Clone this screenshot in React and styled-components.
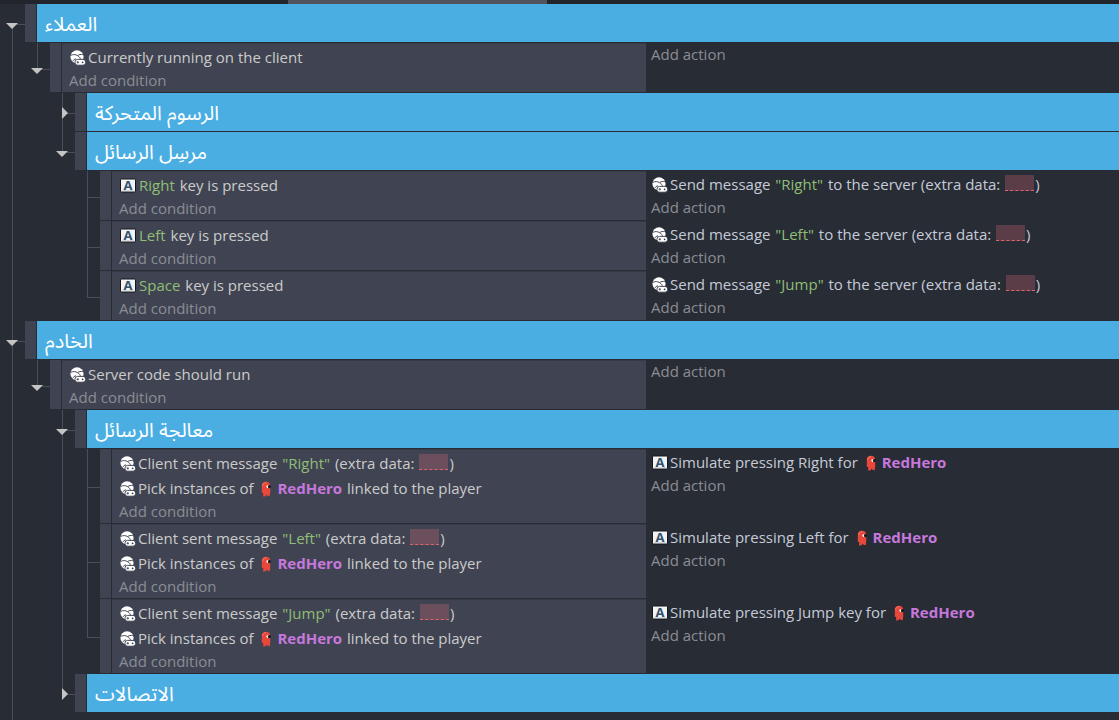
import React from "react";
import styled, { createGlobalStyle, css } from "styled-components";

const INDENT = 25;
const LINE = "#4a4e59";

const GlobalStyle = createGlobalStyle`
  * { box-sizing: border-box; }
  body {
    margin: 0;
    background: #282c34;
    color: #c9ccd3;
    font-family: "Open Sans", "Noto Sans", "DejaVu Sans", sans-serif;
    font-size: 15px;
  }
  button {
    border: 0;
    padding: 0;
    margin: 0;
    background: none;
    color: inherit;
    font: inherit;
    cursor: pointer;
  }
`;

const Page = styled.main`
  display: flex;
  flex-direction: column;
  min-height: 100vh;
  overflow: hidden;
`;

const TopStrip = styled.div`
  display: grid;
  grid-template-columns: 288fr 259fr 572fr;
  height: 4px;
  background: #23252c;
`;

const ActiveTab = styled.div`
  grid-column: 2;
  background: #50545f;
`;

const List = styled.ul`
  list-style: none;
  margin: 0;
  padding: 0;
`;

const Tree = styled(List)`
  position: relative;
  flex: 1;
  &::before {
    content: "";
    position: absolute;
    left: 12px;
    top: 20px;
    bottom: 0;
    width: 1px;
    background: ${LINE};
  }
`;

const Children = styled(List)`
  padding-left: ${INDENT}px;
`;

const Node = styled.li`
  position: relative;
  ${({ $continues }) =>
    $continues &&
    css`
      &::before {
        content: "";
        position: absolute;
        left: 12px;
        top: 0;
        bottom: 0;
        width: 1px;
        background: ${LINE};
      }
    `}
`;

const Row = styled.div`
  display: flex;
  padding-bottom: 1px;
`;

const Gutter = styled.div`
  position: relative;
  flex: 0 0 ${INDENT}px;
  display: flex;
  align-items: center;
  &::before {
    content: "";
    position: absolute;
    left: 12px;
    right: 0;
    top: ${({ $root }) => ($root ? "50%" : "0")};
    height: ${({ $root }) => ($root ? "1px" : "calc(50% + 1px)")};
    border-left: 1px solid ${LINE};
    border-bottom: 1px solid ${LINE};
  }
`;

const Fold = styled.button`
  position: relative;
  display: flex;
  margin-left: ${({ $open }) => ($open ? "6px" : "12px")};
  padding-top: ${({ $open }) => ($open ? "6px" : "2px")};
  color: #c4c4c4;
`;

const Handle = styled.div`
  flex: 0 0 11px;
  margin-right: 1px;
  background: #404452;
`;

const GroupBar = styled.h2`
  flex: 1;
  display: flex;
  align-items: center;
  margin: 0;
  padding: 3px 8px 0;
  height: 38px;
  background: #4aaee3;
  color: #fff;
  font-family: "Noto Sans Arabic", "Noto Naskh Arabic", "DejaVu Sans", sans-serif;
  font-size: 20px;
  font-weight: 400;
  line-height: 34px;
`;

const Conditions = styled.div`
  flex: 0 0 calc(58vw - ${({ $left }) => $left + 3}px);
  padding: 0 7px;
  border-top: 1px solid #363a46;
  background: #404452;
  color: #cbcbcb;
`;

const Actions = styled.div`
  flex: 1;
  min-width: 0;
  padding: 0 5px;
  color: #c5cad8;
`;

const Instruction = styled.div`
  display: flex;
  align-items: center;
  height: 25px;
  padding-top: 1px;
  line-height: 24px;
  white-space: pre;
`;

const Icon = styled.svg`
  flex: none;
  display: block;
  overflow: visible;
  width: 16px;
  height: 16px;
  margin: 1px 2px 0 1px;
`;

const HeroIcon = styled.svg`
  flex: none;
  width: 10px;
  height: 16px;
  margin: 2px 6px 0 4px;
`;

const Param = styled.button`
  padding: 0 1px;
  color: #8fbe76;
`;

const ObjectParam = styled.button`
  display: flex;
  align-items: center;
  padding-right: 1px;
  color: #c678dd;
  font-weight: 700;
`;

const MissingParam = styled.button`
  width: 29px;
  height: 16px;
  margin: 0 1px 3px 1px;
  border-bottom: 1px dashed #e0626c;
  background: rgba(224, 108, 117, 0.28);
`;

const AddButton = styled.button`
  display: block;
  height: 23px;
  line-height: 23px;
  color: #8a8d95;
`;

const NetIcon = () => (
  <Icon viewBox="0 0 16 16" aria-hidden="true">
    <circle cx="7" cy="6.8" r="6.6" fill="#fff" />
    <path d="M.8 5.4C3 4.2 5.6 4.4 7.6 5.6C9.4 6.6 10.2 8 10.6 9.6M7.6 5.6C8.8 4.6 10.8 4.2 12.8 4.6M2.6 11.4C3.4 10 4.6 9 6 8.8" fill="none" stroke="#343945" strokeWidth=".9" />
    <path d="M7.5 9.4h5.6a2.6 2.9 0 0 1 0 5.8H7.5a2.6 2.9 0 0 1 0-5.8z" fill="#fff" stroke="#343945" strokeWidth=".9" />
    <path d="M6.6 12.3h2.4M7.8 11.1v2.4" stroke="#343945" strokeWidth=".8" />
    <circle cx="12.6" cy="12.3" r=".9" fill="#343945" />
  </Icon>
);

const KeyIcon = () => (
  <Icon viewBox="0 0 16 16" aria-hidden="true">
    <rect x=".5" y="1" width="15" height="13" rx="1" fill="#f2f3f4" stroke="#15171b" />
    <path d="M2 12.6h12" stroke="#d3d7da" />
    <text x="8" y="12" textAnchor="middle" fontFamily="Open Sans, sans-serif" fontSize="13" fontWeight="700" fill="#34516e">A</text>
  </Icon>
);

const Hero = () => (
  <HeroIcon viewBox="0 0 10 16" aria-hidden="true">
    <path d="M.8 5C.8 2.2 2.4.8 5 .8S9.2 2.2 9.2 5v7l-.6 3.2-2.2-.4-.8-1.4-.8 1.8-2.8.2.4-3L.8 11.6z" fill="#e8473c" />
    <path d="M1.6 5C1.7 2.8 3 1.7 5 1.7" fill="none" stroke="#f4796c" />
    <circle cx="6.8" cy="5.6" r="1.4" fill="#fff" />
    <ellipse cx="8.4" cy="5.6" rx="1.5" ry="1.6" fill="#15171b" />
  </HeroIcon>
);

const RedHero = () => (
  <ObjectParam type="button"><Hero />RedHero</ObjectParam>
);

const FoldToggle = ({ open }) => (
  <Fold type="button" $open={open} aria-expanded={open} aria-label={open ? "Collapse" : "Expand"}>
    {open ? (
      <svg width="12" height="6" viewBox="0 0 12 6"><path d="M0 0h12L6 6z" fill="currentColor" /></svg>
    ) : (
      <svg width="6" height="12" viewBox="0 0 6 12"><path d="M0 0v12l6-6z" fill="currentColor" /></svg>
    )}
  </Fold>
);

const Group = ({ title, open = true, root, continues, children }) => (
  <Node $continues={continues}>
    <Row>
      <Gutter $root={root}><FoldToggle open={open} /></Gutter>
      <Handle />
      <GroupBar><span dir="rtl" lang="ar">{title}</span></GroupBar>
    </Row>
    {children && <Children>{children}</Children>}
  </Node>
);

const Event = ({ depth, conditions, actions, continues, children }) => (
  <Node $continues={continues}>
    <Row>
      <Gutter>{children && <FoldToggle open />}</Gutter>
      <Handle />
      <Conditions $left={depth * INDENT + 12}>
        {conditions}
        <AddButton type="button">Add condition</AddButton>
      </Conditions>
      <Actions>
        {actions}
        <AddButton type="button">Add action</AddButton>
      </Actions>
    </Row>
    {children && <Children>{children}</Children>}
  </Node>
);

const messages = [
  { key: "Right", message: "Right", press: "Right" },
  { key: "Left", message: "Left", press: "Left" },
  { key: "Space", message: "Jump", press: "Jump key" },
];

const ClientEvent = ({ item, continues }) => (
  <Event
    depth={4}
    continues={continues}
    conditions={
      <Instruction><KeyIcon /><Param type="button">{item.key}</Param>{" key is pressed"}</Instruction>
    }
    actions={
      <Instruction>
        <NetIcon />{"Send message "}<Param type="button">"{item.message}"</Param>
        {" to the server (extra data: "}<MissingParam type="button" aria-label="Extra data" />{")"}
      </Instruction>
    }
  />
);

const ServerEvent = ({ item, continues }) => (
  <Event
    depth={4}
    continues={continues}
    conditions={
      <>
        <Instruction>
          <NetIcon />{"Client sent message "}<Param type="button">"{item.message}"</Param>
          {" (extra data: "}<MissingParam type="button" aria-label="Extra data" />{")"}
        </Instruction>
        <Instruction><NetIcon />{"Pick instances of "}<RedHero />{" linked to the player"}</Instruction>
      </>
    }
    actions={
      <Instruction><KeyIcon />{`Simulate pressing ${item.press} for `}<RedHero /></Instruction>
    }
  />
);

export default function App() {
  return (
    <>
      <GlobalStyle />
      <Page>
        <TopStrip><ActiveTab /></TopStrip>
        <Tree>
          <Group title="العملاء" root>
            <Event depth={2} conditions={<Instruction><NetIcon />Currently running on the client</Instruction>}>
              <Group title="الرسوم المتحركة" open={false} continues />
              <Group title="مرسِل الرسائل">
                {messages.map((item, i) => (
                  <ClientEvent key={item.key} item={item} continues={i < messages.length - 1} />
                ))}
              </Group>
            </Event>
          </Group>
          <Group title="الخادم" root>
            <Event depth={2} conditions={<Instruction><NetIcon />Server code should run</Instruction>}>
              <Group title="معالجة الرسائل" continues>
                {messages.map((item, i) => (
                  <ServerEvent key={item.key} item={item} continues={i < messages.length - 1} />
                ))}
              </Group>
              <Group title="الاتصالات" open={false} />
            </Event>
          </Group>
        </Tree>
      </Page>
    </>
  );
}
